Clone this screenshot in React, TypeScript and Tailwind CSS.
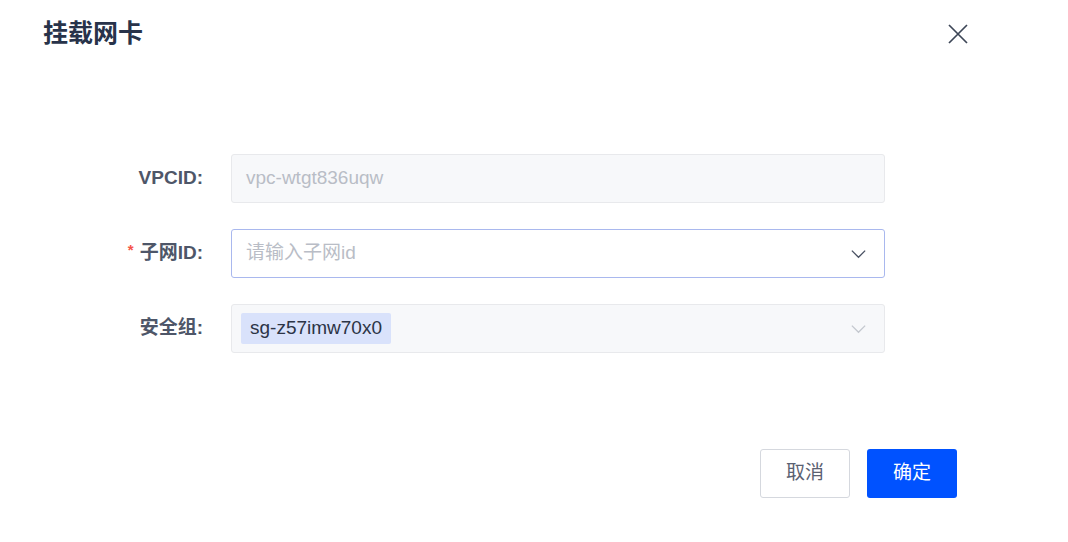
import React from 'react';

const font = { fontFamily: '"Liberation Sans", "Noto Sans CJK SC", sans-serif' };

const Chevron = ({ className }: { className: string }) => (
    <svg viewBox="0 0 20 20" className={className} fill="none" stroke="currentColor" strokeWidth="1.4">
        <path d="M3 7l7 7 7-7" />
    </svg>
);

const Row = ({ label, required, children }: { label: string; required?: boolean; children: React.ReactNode }) => (
    <div className="flex items-center gap-[28px]">
        <div className="w-[160px] text-right text-[19px] font-bold text-[#4e5668]">
            {required && <span className="text-[#f5544a] mr-[6px] text-[15px] align-top">*</span>}
            {label}:
        </div>
        {children}
    </div>
);

export default function App() {
    return (
        <div className="w-[1068px] h-[542px] bg-white flex flex-col pl-[43px] pr-[99px]" style={font}>
            {/* Header */}
            <div className="h-[68px] flex items-center justify-between">
                <h2 className="text-[25px] font-bold text-[#28334a]">挂载网卡</h2>
                <svg viewBox="0 0 24 24" className="w-[24px] h-[24px] mr-[-1px] text-[#3d4657]" fill="none" stroke="currentColor" strokeWidth="1.7">
                    <path d="M3 3l18 18M21 3L3 21" />
                </svg>
            </div>

            {/* Form */}
            <div className="flex flex-col gap-[26px] mt-[86px]">
                <Row label="VPCID">
                    <div className="w-[654px] h-[49px] rounded-[3px] border border-[#e8e9ec] bg-[#f7f8fa] flex items-center px-[14px] text-[19px] text-[#b9bdc6]">
                        vpc-wtgt836uqw
                    </div>
                </Row>
                <Row label="子网ID" required>
                    <div className="w-[654px] h-[49px] rounded-[3px] border border-[#a9b8ee] bg-white flex items-center justify-between pl-[14px] pr-[16px] text-[19px] text-[#b9bdc6]">
                        <span>请输入子网id</span>
                        <Chevron className="w-[19px] h-[19px] text-[#4a5263]" />
                    </div>
                </Row>
                <Row label="安全组">
                    <div className="w-[654px] h-[49px] rounded-[3px] border border-[#e8e9ec] bg-[#f7f8fa] flex items-center justify-between pl-[9px] pr-[16px]">
                        <span className="h-[31px] px-[9px] flex items-center bg-[#d9e2fb] rounded-[2px] text-[19px] text-[#2c3446]">sg-z57imw70x0</span>
                        <Chevron className="w-[19px] h-[19px] text-[#c4c8cf]" />
                    </div>
                </Row>
            </div>

            {/* Footer */}
            <div className="flex justify-end gap-[17px] mt-[96px] pr-[12px]">
                <button className="w-[90px] h-[49px] rounded-[3px] border border-[#d5d8de] bg-white text-[19px] text-[#5a6172]">取消</button>
                <button className="w-[90px] h-[49px] rounded-[3px] bg-[#0052ff] text-[19px] text-white">确定</button>
            </div>
        </div>
    );
}
